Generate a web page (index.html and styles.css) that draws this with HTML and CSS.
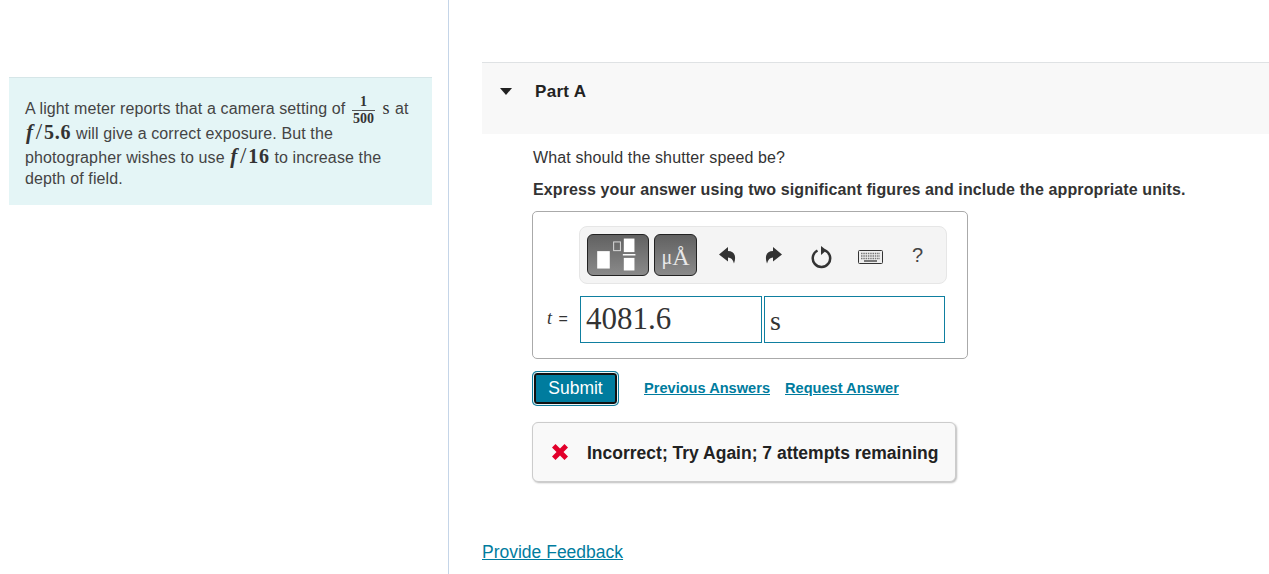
FILE: index.html
```html
<!DOCTYPE html>
<html lang="en">
<head>
<meta charset="utf-8">
<title>Part A</title>
<link rel="stylesheet" href="styles.css">
</head>
<body>
<div class="page">
  <aside class="left">
    <div class="intro">
      <div class="line line-first">A light meter reports that a camera setting of
        <span class="frac"><span class="num">1</span><span class="den">500</span></span>
        <span class="m m-unit">s</span> at</div>
      <div class="line line-second"><span class="m"><i>f</i><span class="sl">/</span>5.6</span> will give a correct exposure. But the</div>
      <div class="line line-third">photographer wishes to use <span class="m"><i>f</i><span class="sl">/</span>16</span> to increase the</div>
      <div class="line line-fourth">depth of field.</div>
    </div>
  </aside>
  <main class="right">
    <header class="part-head">
      <span class="caret"></span>
      <span class="part-title">Part A</span>
    </header>
    <section class="part-body">
      <p class="q">What should the shutter speed be?</p>
      <p class="instr">Express your answer using two significant figures and include the appropriate units.</p>
      <div class="answer">
        <div class="toolbar">
          <button class="tbtn tbtn-templ" aria-label="Templates">
            <svg width="62" height="42" viewBox="0 0 62 42">
              <rect x="9.5" y="17" width="13" height="18" fill="#fff"/>
              <rect x="26.5" y="7.5" width="7" height="9" fill="none" stroke="#ddd" stroke-width="1"/>
              <rect x="37" y="4" width="11" height="14" fill="#fff"/>
              <rect x="36" y="20" width="13" height="1.5" fill="#fff"/>
              <rect x="37" y="24" width="11" height="13" fill="#fff"/>
            </svg>
          </button>
          <button class="tbtn tbtn-unit"><span class="mu">μ</span>Å</button>
          <span class="ico ico-undo"><svg width="20" height="20" viewBox="0 0 20 20"><path d="M2 9.500 11 2V6C16.500 6 20 10 17 18.500 16 14.500 14 12.500 11 12.500V16.500Z" fill="#333"/></svg></span>
          <span class="ico ico-redo"><svg width="20" height="20" viewBox="0 0 20 20"><path d="M18 9.500 9 2V6C3.500 6 0 10 3 18.500 4 14.500 6 12.500 9 12.500V16.500Z" fill="#333"/></svg></span>
          <span class="ico ico-reset"><svg width="22" height="24" viewBox="0 0 22 24"><path d="M14 5.300A8.700 8.700 0 1 1 6.500 5.500" fill="none" stroke="#333" stroke-width="2.500"/><path d="M10 1 15.500 5.300 10 10Z" fill="#333"/></svg></span>
          <span class="ico ico-kbd"><svg width="26" height="16" viewBox="0 0 26 16"><rect x="0.500" y="1.500" width="24" height="13" rx="1" fill="#eee" stroke="#333"/><path d="M3 4.500H22M3 7H22M3 9.500H22" stroke="#777" stroke-width="1.400" stroke-dasharray="1.500 0.800"/><path d="M6 12H19" stroke="#444" stroke-width="1.400"/></svg></span>
          <span class="help">?</span>
        </div>
        <div class="eq">
          <span class="var"><i>t</i> <span class="eqs">=</span></span>
          <span class="field field-value">4081.6</span>
          <span class="field field-unit">s</span>
        </div>
      </div>
      <div class="actions">
        <button class="submit">Submit</button>
        <a class="act" href="#">Previous Answers</a>
        <a class="act" href="#">Request Answer</a>
      </div>
      <div class="feedback">
        <svg class="x" width="18" height="18" viewBox="0 0 18 18"><path d="M1 4.500 4.500 1 9 5.500 13.500 1 17 4.500 12.500 9 17 13.500 13.500 17 9 12.500 4.500 17 1 13.500 5.500 9Z" fill="#e2002b"/></svg>
        <span class="fb-text">Incorrect; Try Again; 7 attempts remaining</span>
      </div>
    </section>
    <a class="provide" href="#">Provide Feedback</a>
  </main>
</div>
</body>
</html>
```

FILE: styles.css
```css
* { box-sizing: border-box; }
html, body { margin: 0; height: 100%; background: #fff; overflow: hidden; }
body { font-family: "Liberation Sans", Arial, sans-serif; font-size: 16px; color: #333; }
.page { display: flex; height: 574px; }
.left { width: 449px; flex: none; border-right: 1px solid #c5d5e8; padding: 77px 16px 0 9px; }
.intro { height: 128px; background: #e4f5f6; border-top: 1px solid #d6e6e8; padding: 16px 0 0 16px; color: #444; letter-spacing: 0.12px; }
.line { white-space: nowrap; }
.line-first { height: 26px; line-height: 29px; }
.line-second { height: 24px; line-height: 24px; }
.line-third { height: 23px; line-height: 20px; }
.line-fourth { height: 22px; line-height: 24px; }
.m { font-family: "Liberation Serif", serif; font-size: 20px; font-weight: 700; color: #333; line-height: 1; letter-spacing: 0.8px; }
.m i { font-weight: 700; font-size: 21px; margin-left: 1px; margin-right: 2px; }
.sl { font-weight: 400; font-size: 23px; margin-right: 1px; }
.m-unit { font-size: 18px; font-weight: 400; margin-left: 1px; margin-right: 1px; letter-spacing: 0; }
.frac { display: inline-flex; flex-direction: column; align-items: center; vertical-align: middle; font-family: "Liberation Serif", serif; font-size: 14px; line-height: 13px; font-weight: 700; letter-spacing: 0; margin: 0 2px; color: #333; }
.num { padding: 0 2px 2px; }
.den { border-top: 1px solid #555; padding: 1px 0 0; width: 23px; text-align: center; }
.right { flex: 1; min-width: 0; padding: 62px 0 0 33px; }
.part-head { height: 72px; background: #f8f8f8; border-top: 1px solid #dfe2e4; display: flex; align-items: flex-start; padding: 18px 0 0 18px; }
.caret { width: 0; height: 0; margin-top: 7px; border-left: 6.500px solid transparent; border-right: 6.500px solid transparent; border-top: 7px solid #222; }
.part-title { font-weight: 700; font-size: 17px; margin-left: 23px; color: #222; line-height: 22px; letter-spacing: 0.3px; }
.part-body { padding-left: 50px; }
.q { margin: 14px 0 0 1px; line-height: 20px; letter-spacing: 0.12px; }
.instr { margin: 12px 0 0 1px; line-height: 20px; font-weight: 700; letter-spacing: 0.106px; }
.answer { width: 436px; height: 148px; margin-top: 11px; border: 1px solid #aaa; border-radius: 5px; padding: 14px 0 0 46px; }
.toolbar { width: 368px; height: 58px; background: #f4f4f4; border: 1px solid #e6e6e6; border-radius: 8px; display: flex; align-items: center; padding-left: 7px; }
.tbtn { height: 42px; border: 1px solid #222; border-radius: 6px; background: linear-gradient(#616161, #8a8a8a); padding: 0; color: #fff; display: flex; align-items: center; justify-content: center; }
.tbtn-templ { width: 62px; }
.tbtn-unit { width: 43px; margin-left: 5px; font-family: "Liberation Serif", serif; font-size: 24px; line-height: 42px; font-weight: 400; color: #e8e8e8; padding-top: 3px; }
.mu { font-size: 20px; }
.ico { display: flex; align-items: center; justify-content: center; }
.ico-undo { margin-left: 20px; }
.ico-redo { margin-left: 27px; }
.ico-reset { margin-left: 27px; margin-top: 3px; }
.ico-kbd { margin-left: 25px; margin-top: 3px; }
.help { margin-left: 28px; font-size: 20px; color: #444; margin-top: 1px; }
.eq { display: flex; align-items: flex-start; margin-top: 12px; margin-left: -33px; }
.var { width: 34px; padding-top: 12px; padding-left: 1px; font-family: "Liberation Serif", serif; font-size: 18px; line-height: 20px; white-space: nowrap; }
.eqs { font-family: "Liberation Sans", sans-serif; font-size: 16px; margin-left: 2px; }
.field { height: 47px; border: 1px solid #0f7fa0; font-family: "Liberation Serif", serif; color: #333; padding-left: 5px; }
.field-value { width: 182px; font-size: 31px; line-height: 43px; }
.field-unit { width: 181px; margin-left: 2px; font-size: 28px; line-height: 47px; }
.actions { display: flex; align-items: center; margin-top: 12px; }
.submit { width: 83px; height: 31px; margin: 2px; padding: 0; background: #007c9e; color: #fff; border: 2px solid #111; outline: 1px solid #e8f4f7; box-shadow: 0 0 0 2px #0e7c9c; border-radius: 3px; font: 17.500px "Liberation Sans", Arial, sans-serif; }
.act { color: #007c9e; font-weight: 700; font-size: 14.600px; text-decoration: underline; margin-left: 15px; margin-bottom: 2px; }
.act:first-of-type { margin-left: 25px; }
.feedback { width: 424px; height: 60px; margin-top: 16px; background: #f9f9f9; border: 1px solid #ccc; border-radius: 6px; box-shadow: 1px 1px 2px #bbb; display: flex; align-items: center; padding-left: 18px; font-weight: 700; font-size: 17.500px; color: #222; white-space: nowrap; }
.fb-text { padding-top: 2px; }
.x { margin-right: 18px; flex: none; }
.provide { display: inline-block; margin-top: 59px; font-size: 17.500px; line-height: 22px; color: #007c9e; text-decoration: underline; }
```
